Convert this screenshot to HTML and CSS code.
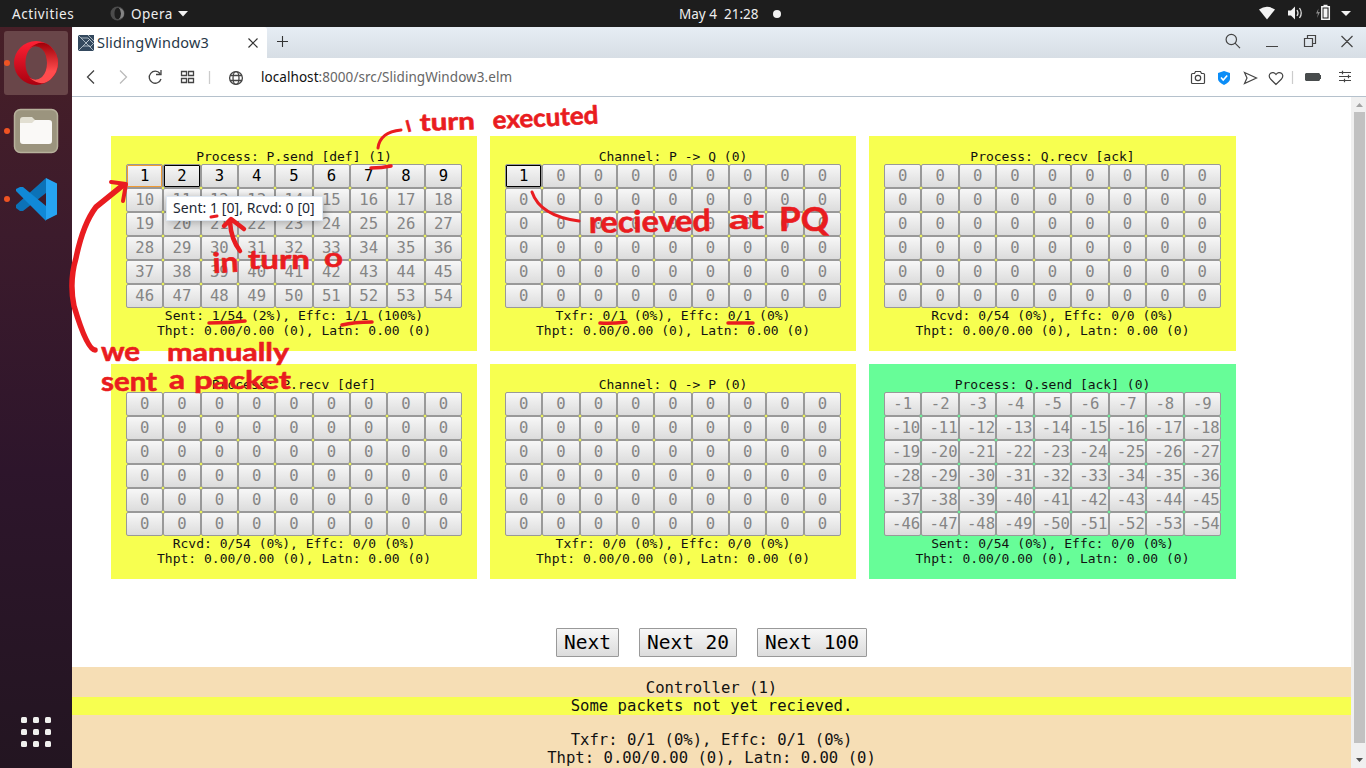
FILE: index.html
```html
<!DOCTYPE html>
<html lang="en">
<head>
<meta charset="utf-8">
<title>SlidingWindow3</title>
<link rel="stylesheet" href="styles.css">
</head>
<body>
<div class="desktop">
  <header class="topbar">
    <span class="activities">Activities</span>
    <span class="app-menu">
      <svg width="15" height="15" viewBox="0 0 15 15"><path d="M7.500 .5a7 7 0 1 0 0 14a7 7 0 1 0 0-14zM7.700 2C10 2 11 4.500 11 7.500S10 13 7.700 13S4.500 10.500 4.500 7.500S5.500 2 7.700 2z" fill="#4c4c4c" fill-rule="evenodd"/><path d="M9 2Q14 3 14 7.500T9 13Q11 11 11 7.500T9 2z" fill="#858585"/></svg>
      <span class="app-name">Opera</span>
      <svg width="10" height="6"><path d="M0 0h10L5 5.5z" fill="#f2f2f2"/></svg>
    </span>
    <span class="clock">May 4&nbsp; 21:28</span>
    <i class="notice"></i>
    <svg class="tray" width="100" height="27" viewBox="1256 0 100 27">
      <path d="M1259 9.500Q1267 4 1275 9.500L1267 19.500z" fill="#f2f2f2"/>
      <path d="M1288 10.500h3l4-4v13l-4-4h-3z" fill="#f2f2f2"/>
      <path d="M1297 10q2 3 0 6M1299.500 8q3.500 5 0 10" fill="none" stroke="#ddd" stroke-width="1.3"/>
      <path d="M1318.500 8.500l-2.500 5h2l-1 4.500 3-6h-2z" fill="#888"/>
      <path d="M1321.800 6.800h7.500v12.500h-7.500zM1323.500 5.500h4" fill="none" stroke="#f2f2f2" stroke-width="1.500"/>
      <path d="M1323.500 8.500h4v9h-4z" fill="#f2f2f2"/>
      <path d="M1341 11h10l-5 5z" fill="#f2f2f2"/>
    </svg>
  </header>
  <div class="main">
    <aside class="dock">
      <div class="dock-item active">
        <svg width="44" height="44" viewBox="0 0 44 44">
          <defs>
            <linearGradient id="ring" x1="0" y1="0" x2="0" y2="1"><stop offset="0" stop-color="#ff2135"/><stop offset="1" stop-color="#a9000f"/></linearGradient>
            <linearGradient id="ring2" x1="0" y1="0" x2="0" y2="1"><stop offset="0" stop-color="#9f0008"/><stop offset=".7" stop-color="#ff4b4d"/></linearGradient>
          </defs>
          <path d="M22 0a22 22 0 1 0 0 44a22 22 0 1 0 0-44zM22.500 5C29 5 33 12 33 22S29 39 22.500 39S11.500 32 11.500 22S16 5 22.500 5z" fill="url(#ring)" fill-rule="evenodd"/>
          <path d="M15 7.500Q28-3 37 6Q44 13 44 22T37 38Q28 47 15 36.500Q22 41 28 36Q33 31 33 22T28 8Q22 3 15 7.500z" fill="url(#ring2)"/>
        </svg>
      </div>
      <div class="dock-item files">
        <svg width="46" height="46" viewBox="0 0 46 46">
          <rect x="1.500" y="1.500" width="43" height="43" rx="6" fill="#9b947e" stroke="#b7b19c" stroke-width="1.500"/>
          <path d="M7 12q0-3 3-3h9l3 3v4H7z" fill="#e2dfd2"/>
          <path d="M7 15h12l3-3h14q3 0 3 3v18q0 3-3 3H10q-3 0-3-3z" fill="#faf9f7"/>
        </svg>
      </div>
      <div class="dock-item code">
        <svg width="43" height="43" viewBox="0 0 43 43">
          <path d="M31 0L1 27v3l4 3h3l23-18z" fill="#0c72b7"/>
          <path d="M1 13v-2l4-2h3l23 19v15z" fill="#1089d7"/>
          <path d="M31 0l11 5.500v31L31 42z" fill="#26a4f2"/>
        </svg>
      </div>
      <div class="apps"><i></i><i></i><i></i><i></i><i></i><i></i><i></i><i></i><i></i></div>
    </aside>
    <section class="browser">
      <div class="tabs">
        <div class="tab">
          <svg width="16" height="16" viewBox="0 0 16 16"><path d="M0 0h16v16H0z" fill="#34495e"/><path d="M0 0l16 16M12 4L0 16M3 3h7l5 5M8 8l4-4M10 0l6 6M12 12l4-4M5 11h7" fill="none" stroke="#c6d0d8" stroke-width=".8"/></svg>
          <span class="tab-title">SlidingWindow3</span>
          <svg class="tab-close" width="10" height="10"><path d="M.5.5l9 9M9.500.5l-9 9" stroke="#333" stroke-width="1.2"/></svg>
        </div>
        <svg class="new-tab" width="12" height="12"><path d="M5.500 0v11M0 5.500h11" stroke="#333" stroke-width="1.1"/></svg>
        <svg class="window-icons" width="136" height="31" viewBox="1220 27 136 31" fill="none" stroke="#444" stroke-width="1.2">
          <circle cx="1231.300" cy="39.500" r="5.200"/><path d="M1235 43.200l5 5M1266 46.500h12M1304.500 38.500h8v8h-8zM1307.500 38.500v-3h8v8h-3M1341.500 36l11 11M1352.500 36l-11 11"/>
        </svg>
      </div>
      <div class="toolbar">
        <svg class="nav-icons" width="175" height="38" viewBox="80 58 175 38" fill="none" stroke="#444" stroke-width="1.3">
          <path d="M94 70.500l-6.500 6.500 6.500 6.500"/><path d="M120 70.500l6.500 6.500-6.500 6.500" stroke="#bbb"/>
          <path d="M160 73.500A6 6 0 1 0 161 79M161 70v4.500h-5"/>
          <path d="M181.500 71.500h5v4h-5zM188.500 71.500h5v4h-5zM181.500 78.500h5v4h-5zM188.500 78.500h5v4h-5z"/>
          <path d="M209.500 71v13" stroke="#ccc"/>
          <circle cx="236" cy="78" r="6.400"/><ellipse cx="236" cy="78" rx="3" ry="6.400"/><path d="M230 75.500h12M230 80.500h12"/>
        </svg>
        <span class="url"><b>localhost</b>:8000/src/SlidingWindow3.elm</span>
        <svg class="tool-icons" width="170" height="38" viewBox="1186 58 170 38" fill="none" stroke="#444" stroke-width="1.2">
          <path d="M1191.500 74.500q0-1 1-1h2l1-2h5l1 2h2q1 0 1 1v8q0 1-1 1h-11q-1 0-1-1z"/><circle cx="1198" cy="78" r="2.700"/>
          <path d="M1218 73l6-2 6 2v6q0 3-6 6q-6-3-6-6z" fill="#0b8df7" stroke="none"/><path d="M1221 77.500l2.200 2.500 4-4.500" stroke="#fff" stroke-width="1.600"/>
          <path d="M1244.500 72.500l12 5.500-12 5.500 2.500-5.500z"/>
          <path d="M1276 84.500l-5.500-5.500c-4-5 2.500-9 5.500-4.500c3-4.500 9.500-.5 5.500 4.500z"/>
          <path d="M1292.500 71v13" stroke="#ccc"/>
          <path d="M1305 74l1-1h13l1 1v1h1v4h-1v1l-1 1h-13l-1-1z" fill="#484c4d" stroke="none"/>
          <path d="M1339 72.500h12M1339 76.500h12M1339 80.500h12M1342.500 70.700v3.600M1348.500 74.700v3.600M1344.500 78.700v3.600"/>
        </svg>
      </div>
      <div class="viewport">
        <main class="page">
          <div class="panels" id="panels"></div>
          <div class="steps"><button>Next</button><button>Next 20</button><button>Next 100</button></div>
          <div class="controller">
            <p>Controller (1)</p>
            <p class="status">Some packets not yet recieved.</p>
            <p class="totals">Txfr: 0/1 (0%), Effc: 0/1 (0%)</p>
            <p>Thpt: 0.00/0.00 (0), Latn: 0.00 (0)</p>
          </div>
        </main>
        <div class="scrollbar">
          <svg width="7" height="4"><path d="M0 4h7L3.500 0z" fill="#a3a3a3"/></svg>
          <i class="thumb"></i>
          <svg width="7" height="4"><path d="M0 0h7L3.500 4z" fill="#505050"/></svg>
        </div>
      </div>
    </section>
  </div>
  <div class="tooltip"><span>Sent: 1 [0], Rcvd: 0 [0]</span></div>
  <svg class="ink" width="1366" height="768" viewBox="0 0 1366 768">
    <g class="strokes">
      <path d="M95 350Q87 350 74 306Q69 282 76 258Q83 224 96 207L122 186" stroke-width="5.500"/>
      <path d="M111 182L126 184L123 201" stroke-width="4"/>
      <path d="M378 148Q380 132 401 130" stroke-width="3"/>
      <path d="M371 168Q382 168 391 166" stroke-width="3.500"/>
      <path d="M532 192Q540 216 579 221" stroke-width="3"/>
      <path d="M211 217L217 216" stroke-width="3"/>
      <path d="M240 251Q231 239 230 222M224 226L231 219L244 229" stroke-width="4.500"/>
      <path d="M209 323Q228 323 245 321M342 325Q354 322 372 322M600 323Q610 324 626 322M728 323L753 323" stroke-width="3.500"/>
    </g>
    <g class="notes">
      <text x="406" y="132" font-size="16" textLength="5" lengthAdjust="spacingAndGlyphs" transform="rotate(-15 408 126)">I</text>
      <text x="420" y="131" font-size="24" textLength="55" lengthAdjust="spacingAndGlyphs" transform="rotate(-2 420 131)">turn</text>
      <text x="493" y="129" font-size="25" textLength="106" lengthAdjust="spacingAndGlyphs" transform="rotate(-3 493 129)">executed</text>
      <text x="213" y="273" font-size="28" textLength="26" lengthAdjust="spacingAndGlyphs" transform="rotate(-3 213 273)">in</text>
      <text x="248" y="269" font-size="26" textLength="62" lengthAdjust="spacingAndGlyphs">turn</text>
      <text x="324" y="267" font-size="27" textLength="19" lengthAdjust="spacingAndGlyphs">o</text>
      <text x="589" y="233" font-size="30" textLength="122" lengthAdjust="spacingAndGlyphs" transform="rotate(-1 589 233)">recieved</text>
      <text x="729" y="229" font-size="27" textLength="35" lengthAdjust="spacingAndGlyphs">at</text>
      <text x="779" y="231" font-size="33" textLength="50" lengthAdjust="spacingAndGlyphs">PQ</text>
      <text x="101" y="361" font-size="26" textLength="39" lengthAdjust="spacingAndGlyphs">we</text>
      <text x="167" y="361" font-size="25" textLength="122" lengthAdjust="spacingAndGlyphs">manually</text>
      <text x="101" y="391" font-size="26" textLength="56" lengthAdjust="spacingAndGlyphs">sent</text>
      <text x="169" y="389" font-size="26" textLength="16" lengthAdjust="spacingAndGlyphs">a</text>
      <text x="194" y="389" font-size="25" textLength="97" lengthAdjust="spacingAndGlyphs">packet</text>
    </g>
  </svg>
</div>
<script src="script.js"></script>
</body>
</html>
```
FILE: styles.css
```css
* { box-sizing: border-box; }
body { margin: 0; font-family: "Noto Sans", "Open Sans", sans-serif; }
svg { display: block; flex: none; }
.desktop { position: relative; width: 1366px; height: 768px; overflow: hidden; display: flex; flex-direction: column; }
.topbar { height: 27px; flex: none; display: flex; align-items: center; background: #1d1d1d; color: #eee; font-size: 13.5px; padding: 0 10px 0 12px; white-space: nowrap; }
.activities { width: 98px; letter-spacing: .6px; }
.app-menu { display: flex; align-items: center; width: 569px; }
.app-name { width: 42px; margin: 0 5px 0 6px; letter-spacing: .5px; }
.clock { width: 82px; }
.notice { width: 8px; height: 8px; margin-left: 12px; border-radius: 50%; background: #f2f2f2; }
.tray { margin-left: auto; }
.main { flex: 1; min-height: 0; display: flex; }
.dock { width: 72px; flex: none; display: flex; flex-direction: column; align-items: center; padding: 4px 4px 21px; background: linear-gradient(#471f27, #3c1b2c 28%, #2d152b 60%, #231521); }
.dock-item { position: relative; width: 64px; height: 64px; margin-bottom: 4px; border-radius: 3px; display: flex; align-items: center; justify-content: center; }
.dock-item.active { background: #694649; }
.dock-item::before { content: ""; position: absolute; left: 0; top: 29px; width: 6px; height: 6px; border-radius: 50%; background: #ef5323; }
.apps { margin-top: auto; display: grid; grid-template-columns: repeat(3, 6px); gap: 6px; }
.apps i { height: 6px; border-radius: 1.5px; background: #f0f0ee; }
.browser { flex: 1; min-width: 0; display: flex; flex-direction: column; background: #fff; }
.tabs { height: 31px; display: flex; align-items: center; background: linear-gradient(#e6edf4, #d7dee5); }
.tab { width: 195px; height: 31px; background: #fff; border-radius: 3px 3px 0 0; display: flex; align-items: center; padding-left: 6px; }
.tab-title { width: 113px; margin: 0 0 2px 3px; font-size: 14.5px; letter-spacing: .2px; color: #283848; white-space: nowrap; }
.tab-close { margin-left: 38px; }
.new-tab { margin-left: 10px; margin-bottom: 1px; }
.window-icons { margin-left: auto; margin-right: 10px; }
.toolbar { height: 39px; display: flex; align-items: center; padding: 0 10px 0 8px; border-bottom: 1px solid #b5c1cc; }
.url { margin-left: 6px; font-size: 13.5px; letter-spacing: .06px; color: #666; white-space: nowrap; }
.url b { font-weight: 400; color: #111; }
.tool-icons { margin-left: auto; }
.viewport { flex: 1; min-height: 0; display: flex; }
.page { width: 1279px; display: flex; flex-direction: column; font-family: "DejaVu Sans Mono", monospace; font-size: 13px; line-height: 15px; color: #111; }
.panels { margin: 39px 115px 0 39px; display: grid; grid-template-columns: 366px 366px 367px; gap: 13px; }
.panel { background: #f7ff50; padding: 13px 15px; text-align: center; height: 215px; }
.panel.green { background: #67fd98; }
.cells { display: grid; grid-template-columns: repeat(9, minmax(0, 1fr)); grid-auto-rows: 24px; }
.cell { border: 1px solid #999; border-radius: 2px; padding: 0 7px; background: linear-gradient(#f7f7f7, #dcdcdc); color: #858585; font-size: 15.6px; line-height: 22px; white-space: nowrap; }
.cell.ready { color: #000; }
.cell.sent { box-shadow: inset 0 0 0 1px #000; }
.cell.focus { box-shadow: inset 0 0 0 1px #f09a32; }
.steps { display: flex; justify-content: center; gap: 20px; margin: 49px 0 10px; }
.steps button { height: 29px; padding: 0 7px; border: 1px solid #999; border-radius: 1px; background: linear-gradient(#f7f7f7, #dcdcdc); color: #000; font: 19.5px/27px "DejaVu Sans Mono", monospace; }
.controller { flex: 1; padding-top: 12px; background: #f6deb5; text-align: center; font-size: 15.6px; line-height: 18px; }
.controller p { margin: 0; }
.controller .status { background: #f7ff50; }
.controller .totals { margin-top: 16px; }
.scrollbar { width: 15px; background: #f0f0f0; display: flex; flex-direction: column; align-items: center; padding: 6px 0 6px 1px; }
.thumb { width: 11px; height: 631px; margin: 5px 0 auto; background: #c1c1c1; }
.tooltip { position: absolute; left: 166px; top: 196px; width: 157px; height: 25px; padding-left: 6px; background: #fff; border: 1px solid #dfe8f2; box-shadow: 1px 2px 9px rgba(0,0,0,.3); font-size: 14px; letter-spacing: .06px; line-height: 22px; color: #1c2733; white-space: nowrap; }
.ink { position: absolute; left: 0; top: 0; }
.strokes { fill: none; stroke: #e91c20; stroke-linecap: round; stroke-linejoin: round; }
.notes { fill: #e91c20; stroke: #e91c20; stroke-width: .6; stroke-linejoin: round; font-family: Lato, sans-serif; font-weight: 700; }
```
FILE: script.js
```js
const zero = () => 0;
const panels = [
  { title: "Process: P.send [def] (1)", value: i => i + 1, ready: 9, mark: { 0: "focus", 1: "sent" }, stat: "Sent: 1/54 (2%), Effc: 1/1 (100%)" },
  { title: "Channel: P -> Q (0)", value: i => (i === 0 ? 1 : 0), ready: 1, mark: { 0: "sent" }, stat: "Txfr: 0/1 (0%), Effc: 0/1 (0%)" },
  { title: "Process: Q.recv [ack]", value: zero, stat: "Rcvd: 0/54 (0%), Effc: 0/0 (0%)" },
  { title: "Process: P.recv [def]", value: zero, stat: "Rcvd: 0/54 (0%), Effc: 0/0 (0%)" },
  { title: "Channel: Q -> P (0)", value: zero, stat: "Txfr: 0/0 (0%), Effc: 0/0 (0%)" },
  { title: "Process: Q.send [ack] (0)", value: i => -(i + 1), green: true, stat: "Sent: 0/54 (0%), Effc: 0/0 (0%)" }
];

function element(className, text) {
  const node = document.createElement("div");
  node.className = className;
  if (text !== undefined) node.textContent = text;
  return node;
}

for (const p of panels) {
  const panel = element(p.green ? "panel green" : "panel");
  const cells = element("cells");
  for (let i = 0; i < 54; i++) {
    const names = ["cell"];
    if (i < (p.ready || 0)) names.push("ready");
    if (p.mark && p.mark[i]) names.push(p.mark[i]);
    cells.append(element(names.join(" "), p.value(i)));
  }
  panel.append(element("title", p.title), cells, element("stat", p.stat), element("stat", "Thpt: 0.00/0.00 (0), Latn: 0.00 (0)"));
  document.getElementById("panels").append(panel);
}
```
